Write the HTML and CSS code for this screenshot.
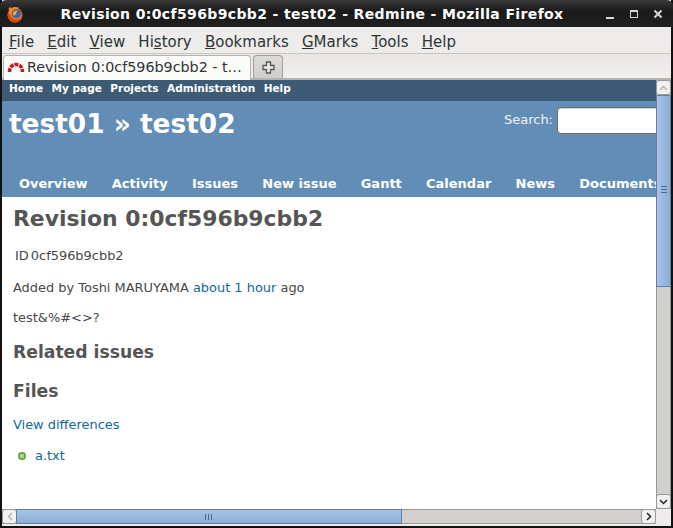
FILE: index.html
```html
<!DOCTYPE html>
<html lang="en">
<head>
<meta charset="utf-8">
<title>Revision 0:0cf596b9cbb2 - test02 - Redmine - Mozilla Firefox</title>
<link rel="stylesheet" href="styles.css">
</head>
<body>
<div class="window">
  <header class="titlebar">
    <svg class="fx" width="18" height="18" viewBox="0 0 18 18"><circle cx="9" cy="10" r="7.500" fill="#e2711c"/><path d="M2.500 4C3 3 4 2 4.500 1.500c0 1 .3 1.500.8 1.700C7 2 10 1.500 13 2.800L9 7 4 9z" fill="#f08a1d"/><path d="M1.500 10c.5 4 3.500 7.500 7.500 7.500 3 0 5.500-1.700 6.700-4.500C13 15.500 8 15.500 5 12.500 3.500 11 2.500 9 2 7z" fill="#c9481a"/><circle cx="10.500" cy="8.500" r="4.500" fill="#3a62ad"/><path d="M7 8c1-2 3-3 5-2.500-1 .2-1.500 1-1.500 2 0 1.500-1 3-3 3-.5-.8-.7-1.700-.5-2.500z" fill="#f6a92c"/></svg>
    <div class="title">Revision 0:0cf596b9cbb2 - test02 - Redmine - Mozilla Firefox</div>
    <div class="wm">
      <svg width="12" height="12" viewBox="0 0 12 12"><rect x="2" y="9" width="8" height="2" fill="#d8d8d8"/></svg>
      <svg width="12" height="12" viewBox="0 0 12 12"><rect x="2.500" y="2.500" width="7" height="7" fill="none" stroke="#d8d8d8"/><rect x="2" y="2" width="8" height="2" fill="#d8d8d8"/></svg>
      <svg width="12" height="12" viewBox="0 0 12 12"><path d="M2.500 2.500l7 7M9.500 2.500l-7 7" stroke="#d8d8d8" stroke-width="2"/></svg>
    </div>
  </header>
  <nav class="menubar">
    <span><u>F</u>ile</span><span><u>E</u>dit</span><span><u>V</u>iew</span><span>Hi<u>s</u>tory</span><span><u>B</u>ookmarks</span><span><u>G</u>Marks</span><span><u>T</u>ools</span><span><u>H</u>elp</span>
  </nav>
  <div class="tabbar">
    <div class="tab">
      <svg width="18" height="11" viewBox="0 0 18 11"><path d="M2.500 10C2.500 5.500 5 2.500 9 2.500s6.500 3 6.500 7.500" fill="none" stroke="#c8141c" stroke-width="3.500" stroke-dasharray="3.800 1"/></svg>
      <span>Revision 0:0cf596b9cbb2 - t…</span>
    </div>
    <div class="newtab">
      <svg width="13" height="13" viewBox="0 0 13 13"><path d="M4.500 1h4v3.500H12v4H8.500V12h-4V8.500H1v-4h3.500z" fill="#ecebe9" stroke="#555" stroke-width="1.300"/></svg>
    </div>
  </div>
  <div class="viewport">
    <main class="page">
      <div class="top-menu">
        <a>Home</a><a>My page</a><a>Projects</a><a>Administration</a><a>Help</a>
      </div>
      <div class="header">
        <div class="header-row">
          <h1>test01 » test02</h1>
          <div class="search"><label>Search:</label><div class="search-input"></div></div>
        </div>
        <div class="main-menu">
          <a>Overview</a><a>Activity</a><a>Issues</a><a>New issue</a><a>Gantt</a><a>Calendar</a><a>News</a><a>Documents</a>
        </div>
      </div>
      <div class="content">
        <h2>Revision 0:0cf596b9cbb2</h2>
        <p class="rev-id"><span>ID</span><span>0cf596b9cbb2</span></p>
        <p class="added">Added by Toshi MARUYAMA <a>about 1 hour</a> ago</p>
        <p class="comment">test&amp;%#&lt;&gt;?</p>
        <h3 class="related">Related issues</h3>
        <h3 class="files">Files</h3>
        <p class="diff"><a>View differences</a></p>
        <ul class="tree">
          <li><i class="bullet"></i><a>a.txt</a></li>
        </ul>
      </div>
    </main>
    <aside class="vscroll">
      <div class="sbtn up"><svg width="9" height="6" viewBox="0 0 9 6"><path d="M1 5l3.500-3.500L8 5" fill="none" stroke="#b5b5b5" stroke-width="1.500"/></svg></div>
      <div class="vtrack"><div class="vthumb"><b></b><b></b><b></b></div></div>
      <div class="sbtn down"><svg width="9" height="6" viewBox="0 0 9 6"><path d="M1 1l3.500 3.500L8 1" fill="none" stroke="#222" stroke-width="1.500"/></svg></div>
    </aside>
    <div class="hscroll">
      <div class="sbtn left"><svg width="6" height="9" viewBox="0 0 6 9"><path d="M5 1L1.500 4.500 5 8" fill="none" stroke="#b5b5b5" stroke-width="1.500"/></svg></div>
      <div class="htrack"><div class="hthumb"><b></b><b></b><b></b></div></div>
      <div class="sbtn right"><svg width="6" height="9" viewBox="0 0 6 9"><path d="M1 1l3.500 3.500L1 8" fill="none" stroke="#222" stroke-width="1.500"/></svg></div>
    </div>
    <div class="corner"></div>
  </div>
</div>
</body>
</html>
```
FILE: styles.css
```css
* { box-sizing: border-box; }
html, body { margin: 0; padding: 0; height: 100%; overflow: hidden; }
body { background: #111; font-family: "DejaVu Sans", sans-serif; }
.window {
  width: 673px; height: 528px;
  display: flex; flex-direction: column;
  background: #edeceb;
  border: solid #111;
  border-width: 0 2px 2px 2px;
}
.titlebar {
  height: 27px; flex: none;
  display: flex; align-items: center;
  background: linear-gradient(#3a3a3a, #1a1a1a 40%, #202020);
  color: #fff;
  padding: 0 9px 0 6px;
  margin: 0 -2px;
  border-radius: 6px 6px 0 0;
}
.fx { flex: none; }
.title {
  flex: 1; text-align: center;
  font-weight: bold; font-size: 14px; letter-spacing: .37px;
  padding: 1px 4px 0 0;
  white-space: nowrap;
}
.wm { display: flex; gap: 12px; flex: none; }
.menubar {
  height: 27px; flex: none;
  display: flex; align-items: center; gap: 13.2px;
  padding: 4px 0 0 7px;
  font-size: 15px; color: #2e3436;
  background: #edeceb;
  border-bottom: 1px solid #c8c6c3;
}
.tabbar {
  height: 26px; flex: none;
  display: flex; align-items: flex-end; gap: 2px;
  padding-left: 1px;
  background: linear-gradient(#e8e7e6, #f0efee);
  border-bottom: 2px solid #b5b3b0;
}
.tab {
  width: 248px; height: 25px;
  display: flex; align-items: center; gap: 2px;
  padding: 0 0 2px 3px;
  background: #fbfbfa;
  border: 1px solid #b5b3b0; border-bottom: 0;
  border-radius: 4px 4px 0 0;
  font-size: 14.3px; color: #2e3436;
  white-space: nowrap;
  margin-bottom: -2px; z-index: 1;
}
.newtab {
  width: 30px; height: 23px;
  display: flex; align-items: center; justify-content: center;
  background: linear-gradient(#dddbd9, #cfcdca);
  border: 1px solid #a09e9b; border-bottom: 0;
  border-radius: 4px 4px 0 0;
}
.viewport {
  flex: 1; min-height: 0;
  display: grid;
  grid-template-columns: 1fr 15px;
  grid-template-rows: 1fr 15px;
  background: #fff;
  margin-bottom: 2px;
}
.page { overflow: hidden; min-width: 0; min-height: 0; }
.top-menu {
  height: 21px;
  display: flex; gap: 8.5px; align-items: center;
  padding: 0 0 5px 7px;
  background: #3e5b76;
  color: #fff; font-size: 10.5px; font-weight: bold;
}
.header { height: 96px; background: #628db6; color: #fff; display: flex; flex-direction: column; }
.header-row { display: flex; justify-content: space-between; flex: 1; padding-left: 7px; white-space: nowrap; min-width: 0; }
h1 { margin: 6px 0 0; font-size: 26.4px; font-weight: bold; line-height: 34px; }
.search { display: flex; gap: 4px; margin: 5px -46px 0 0; height: 29px; align-items: center; font-size: 13px; color: #eef3f8; }
.search label { margin-top: -2px; }
.search-input { width: 145px; height: 27px; background: #fff; border: 1px solid #6c6c6c; border-radius: 4px; box-shadow: inset 0 1px 1px #ccc; }
.main-menu {
  display: flex; gap: 24.2px; height: 27px; align-items: center;
  padding-left: 17px;
  font-size: 13px; font-weight: bold; white-space: nowrap; overflow: hidden;
}
.content { padding: 0 11px; color: #484848; font-size: 12.95px; }
h2 { margin: 8px 0 0; font-size: 21.9px; line-height: 28px; color: #555; font-weight: bold; }
p { margin: 0; }
.rev-id { margin-top: 15px; line-height: 16px; padding-left: 2px; display: flex; gap: 2px; }
.added { margin-top: 16px; line-height: 16px; }
.comment { margin-top: 14px; line-height: 16px; }
h3 { margin: 0; font-size: 17.2px; line-height: 22px; color: #555; font-weight: bold; }
.related { margin-top: 15px; }
.files { margin-top: 17px; }
.diff { margin-top: 15px; line-height: 16px; }
a { color: #169; }
.top-menu a, .main-menu a { color: #fff; }
.tree { list-style: none; margin: 15px 0 0; padding: 0 0 0 5px; display: flex; line-height: 16px; }
.tree li { display: flex; align-items: center; gap: 9px; }
.bullet { width: 8px; height: 8px; border-radius: 50%; background: radial-gradient(circle, #b5dc98 0 22%, #5f9e3e 55%, #3f8028 100%); display: block; }
.vscroll { display: flex; flex-direction: column; background: #d2d0cd; border-left: 1px solid #999; border-right: 1px solid #999; }
.vtrack { flex: 1; min-height: 0; }
.vthumb {
  height: 192px; background: linear-gradient(90deg, #a9c4e6, #8caed8);
  border: 1px solid #5f7fa8;
  margin: 0 -1px;
  padding-bottom: 4px;
  display: flex; flex-direction: column; justify-content: center; align-items: center; gap: 2px;
}
.vthumb b { width: 6px; height: 1px; background: #4d6a8f; }
.sbtn { flex: none; width: 15px; height: 15px; background: #f2f1f0; border: 1px solid #999; border-radius: 3px; display: flex; align-items: center; justify-content: center; }
.vscroll .sbtn { margin-left: -1px; }
.hscroll { display: flex; background: #d2d0cd; border-top: 1px solid #999; border-bottom: 1px solid #999; }
.hscroll .sbtn { margin-top: -1px; }
.hscroll .left { margin-right: -1px; }
.htrack { flex: 1; min-width: 0; }
.hthumb {
  width: 386px; height: 15px; margin-top: -1px;
  padding-right: 2px;
  background: linear-gradient(#a9c4e6, #8caed8);
  border: 1px solid #5f7fa8;
  display: flex; justify-content: center; align-items: center; gap: 2px;
}
.hthumb b { width: 1px; height: 6px; background: #4d6a8f; }
.corner { background: #edeceb; }
```
